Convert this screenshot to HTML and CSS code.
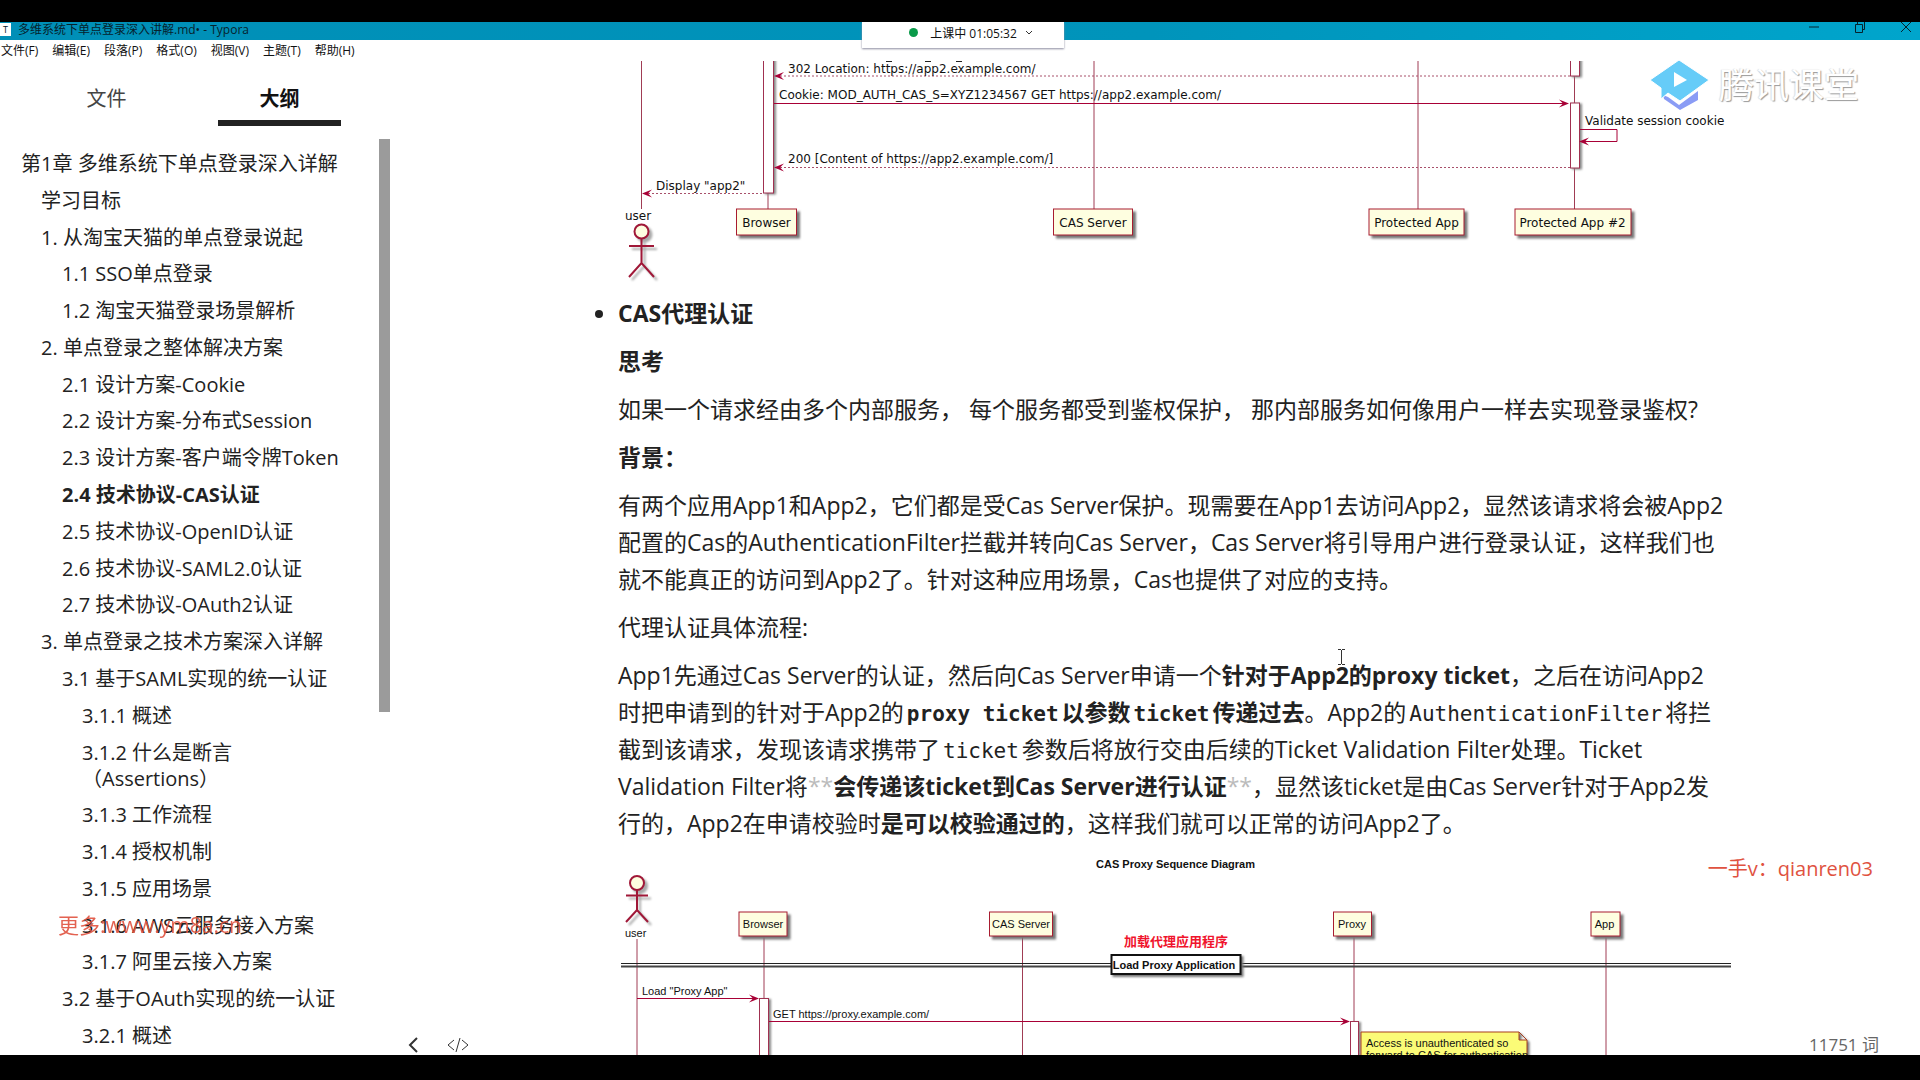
FILE: index.html
```html
<!DOCTYPE html>
<html lang="zh-CN">
  <head>
    <meta charset="UTF-8" />
    <meta name="viewport" content="width=device-width, initial-scale=1.0" />
    <title>多维系统下单点登录深入讲解.md• - Typora</title>
    <link rel="stylesheet" href="styles.css">
  </head>
  <body>
    <div class="window">
      <header class="titlebar">
        <span class="app-icon">T</span>
        <span class="title">多维系统下单点登录深入讲解.md• - Typora</span>
        <div class="controls">
          <button aria-label="最小化">
            <svg width="12" height="12" viewBox="0 0 12 12"><path d="M1 6h10" /></svg>
          </button>
          <button aria-label="还原">
            <svg width="12" height="12" viewBox="0 0 12 12"><path d="M1.5 3.5h7v8h-7zM3.5 3.500v-3h7v8h-2" /></svg>
          </button>
          <button aria-label="关闭">
            <svg width="12" height="12" viewBox="0 0 12 12"><path d="M1 1l10 10M11 1L1 11" /></svg>
          </button>
        </div>
      </header>
      <button class="class-status">
        <span class="dot"></span>
        <span>上课中 01:05:32</span>
        <svg width="8" height="6" viewBox="0 0 8 6"><path d="M1 1l3 3 3-3" /></svg>
      </button>
      <nav class="menubar">
        <button>文件(F)</button>
        <button>编辑(E)</button>
        <button>段落(P)</button>
        <button>格式(O)</button>
        <button>视图(V)</button>
        <button>主题(T)</button>
        <button>帮助(H)</button>
      </nav>
      <div class="workspace">
        <aside class="sidebar">
          <div class="tabs">
            <button class="tab">文件</button>
            <button class="tab active">大纲</button>
          </div>
          <div class="outline-wrap">
            <ul class="outline">
              <li class="l1"><a href="#">第1章 多维系统下单点登录深入详解</a></li>
              <li class="l2"><a href="#">学习目标</a></li>
              <li class="l2"><a href="#">1. 从淘宝天猫的单点登录说起</a></li>
              <li class="l3"><a href="#">1.1 SSO单点登录</a></li>
              <li class="l3"><a href="#">1.2 淘宝天猫登录场景解析</a></li>
              <li class="l2"><a href="#">2. 单点登录之整体解决方案</a></li>
              <li class="l3"><a href="#">2.1 设计方案-Cookie</a></li>
              <li class="l3"><a href="#">2.2 设计方案-分布式Session</a></li>
              <li class="l3"><a href="#">2.3 设计方案-客户端令牌Token</a></li>
              <li class="l3 active"><a href="#">2.4 技术协议-CAS认证</a></li>
              <li class="l3"><a href="#">2.5 技术协议-OpenID认证</a></li>
              <li class="l3"><a href="#">2.6 技术协议-SAML2.0认证</a></li>
              <li class="l3"><a href="#">2.7 技术协议-OAuth2认证</a></li>
              <li class="l2"><a href="#">3. 单点登录之技术方案深入详解</a></li>
              <li class="l3"><a href="#">3.1 基于SAML实现的统一认证</a></li>
              <li class="l4"><a href="#">3.1.1 概述</a></li>
              <li class="l4"><a href="#">3.1.2 什么是断言<br>（Assertions）</a></li>
              <li class="l4"><a href="#">3.1.3 工作流程</a></li>
              <li class="l4"><a href="#">3.1.4 授权机制</a></li>
              <li class="l4"><a href="#">3.1.5 应用场景</a></li>
              <li class="l4"><a href="#">3.1.6 AWS云服务接入方案</a></li>
              <li class="l4"><a href="#">3.1.7 阿里云接入方案</a></li>
              <li class="l3"><a href="#">3.2 基于OAuth实现的统一认证</a></li>
              <li class="l4"><a href="#">3.2.1 概述</a></li>
            </ul>
            <div class="scroll-thumb"></div>
          </div>
        </aside>
        <main class="editor">
          <svg class="diagram seq" width="1120" height="234" viewBox="618 61 1120 234">
            <!-- lifelines -->
            <path class="life" d="M641.5 61v148M768 61v148M1094 61v148M1418 61v148M1574.500 61v148" />
            <g class="act">
              <rect x="763.500" y="50" width="10" height="143" />
              <rect x="1570.500" y="50" width="9" height="26" />
              <rect x="1570.500" y="103" width="9" height="65" />
            </g>
            <!-- messages -->
            <path class="clip-marks" d="M886 61.500h6M925 61.500h6M956 61.500h6" />
            <path class="dash" d="M776 76h794M776 167.500h794M644 193.500h119" />
            <path class="msg" d="M774 103.500h792M1580 129.500h37v12h-35" />
            <path class="head" d="M774 76l10-4-4 4 4 4zM774 167.500l10-4-4 4 4 4zM642 193.500l10-4-4 4 4 4zM1569 103.500l-10-4 4 4-4 4zM1579 141.500l10-4-4 4 4 4z" />
            <text x="788" y="73">302 Location: https://app2.example.com/</text>
            <text x="779" y="99">Cookie: MOD_AUTH_CAS_S=XYZ1234567 GET https://app2.example.com/</text>
            <text x="1585" y="125">Validate session cookie</text>
            <text x="788" y="163">200 [Content of https://app2.example.com/]</text>
            <text x="656" y="190">Display "app2"</text>
            <text x="625" y="220">user</text>
            <g class="actor">
              <circle cx="641.5" cy="231.5" r="7" />
              <path d="M641.500 239v24M629 246h25M629 277l12.500-14 12.500 14" />
            </g>
            <g class="box">
              <rect x="736.500" y="209" width="60" height="26" />
              <rect x="1053.500" y="209" width="79" height="26" />
              <rect x="1369" y="209" width="95" height="26" />
              <rect x="1515" y="209" width="116" height="26" />
            </g>
            <g text-anchor="middle">
              <text x="766.500" y="227">Browser</text>
              <text x="1093" y="227">CAS Server</text>
              <text x="1416.500" y="227">Protected App</text>
              <text x="1572.500" y="227">Protected App #2</text>
            </g>
          </svg>
          <ul class="content">
            <li>
              <p><strong>CAS代理认证</strong></p>
              <p><strong>思考</strong></p>
              <p>如果一个请求经由多个内部服务， 每个服务都受到鉴权保护， 那内部服务如何像用户一样去实现登录鉴权?</p>
              <p><strong>背景：</strong></p>
              <p>有两个应用App1和App2，它们都是受Cas Server保护。现需要在App1去访问App2，显然该请求将会被App2<br>配置的Cas的AuthenticationFilter拦截并转向Cas Server，Cas Server将引导用户进行登录认证，这样我们也<br>就不能真正的访问到App2了。针对这种应用场景，Cas也提供了对应的支持。</p>
              <p>代理认证具体流程:</p>
              <p>App1先通过Cas Server的认证，然后向Cas Server申请一个<strong>针对于App2的proxy ticket</strong>，之后在访问App2<br>时把申请到的针对于App2的<strong><code>proxy ticket</code>以参数<code>ticket</code>传递过去</strong>。App2的<code>AuthenticationFilter</code>将拦<br>截到该请求，发现该请求携带了<code>ticket</code>参数后将放行交由后续的Ticket Validation Filter处理。Ticket<br>Validation Filter将<span class="mark">**</span><strong>会传递该ticket到Cas Server进行认证</strong><span class="mark">**</span>，显然该ticket是由Cas Server针对于App2发<br>行的，App2在申请校验时<strong>是可以校验通过的</strong>，这样我们就可以正常的访问App2了。</p>
            </li>
          </ul>
          <svg class="diagram proxy" width="1120" height="221" viewBox="618 842 1120 221">
            <text class="bold" x="1175.500" y="868" text-anchor="middle">CAS Proxy Sequence Diagram</text>
            <g class="actor">
              <circle cx="637" cy="883" r="7" />
              <path d="M637 890v20M626 895.500h22M626 922l11-12 11 12" />
            </g>
            <text x="625" y="937">user</text>
            <path class="life" d="M637 939v130M764 936v130M1022.500 936v130M1354 936v130M1606 936v130" />
            <g class="box">
              <rect x="739" y="912" width="48" height="24" />
              <rect x="989.500" y="912" width="63" height="24" />
              <rect x="1333.500" y="912" width="38" height="24" />
              <rect x="1591" y="912" width="29" height="24" />
            </g>
            <g text-anchor="middle">
              <text x="763" y="928">Browser</text>
              <text x="1021" y="928">CAS Server</text>
              <text x="1352" y="928">Proxy</text>
              <text x="1604.500" y="928">App</text>
            </g>
            <text class="note-cn" x="1124" y="946">加载代理应用程序</text>
            <!-- divider -->
            <path class="divider" d="M621 963.500h1110" />
            <path class="divider low" d="M621 966.500h1110" />
            <rect class="divider-box" x="1111.500" y="955" width="129" height="19" />
            <text class="bold" x="1174" y="969" text-anchor="middle">Load Proxy Application</text>
            <g class="act">
              <rect x="759.500" y="998.500" width="9" height="80" />
              <rect x="1350.500" y="1021.500" width="8" height="80" />
            </g>
            <path class="msg" d="M637 998.500h118M769 1021.500h577" />
            <path class="head" d="M759 998.500l-10-4 4 4-4 4zM1350 1021.500l-10-4 4 4-4 4z" />
            <text x="642" y="995">Load "Proxy App"</text>
            <text x="773" y="1018">GET https://proxy.example.com/</text>
            <path class="note" d="M1361 1032h158l8 8v40h-166zM1519 1032v8h8" />
            <text x="1366" y="1047">Access is unauthenticated so</text>
            <text x="1366" y="1059">forward to CAS for authentication</text>
          </svg>
        </main>
      </div>

      <div class="footer-left">
        <button aria-label="返回">
          <svg width="12" height="16" viewBox="0 0 12 16"><path d="M10 1L3 8l7 7" /></svg>
        </button>
        <button class="thin" aria-label="源代码模式">
          <svg width="22" height="16" viewBox="0 0 22 16"><path d="M7 3L1 8l6 5M15 3l6 5-6 5M13 1L9 15" /></svg>
        </button>
      </div>
      <div class="word-count">11751 词</div>

      <div class="brand">
        <svg width="60" height="50" viewBox="0 0 60 50">
          <path class="logo-base" d="M13 35l5 2 11 8 19-14v9L30 50 14 39z" />
          <path class="logo-top" d="M29 0l30 20-29 21-12-8-7 6V28L0 20z" />
          <path class="logo-play" d="M24 12v15l13-7z" />
        </svg>
        <span>腾讯课堂</span>
      </div>
      <div class="stamp stamp-left">更多:www.ym8a.cn</div>
      <div class="stamp stamp-right">一手v：qianren03</div>
      <svg class="cursor" width="9" height="18" viewBox="0 0 9 18"><path d="M1 1.500h3M5 1.500h3M4.500 2v14M1 16.500h3M5 16.500h3" /></svg>
    </div>
  </body>
</html>
```
FILE: styles.css
```css
* {
  padding: 0;
  margin: 0;
  box-sizing: border-box;
}
html,
body {
  height: 100%;
}
body {
  background-color: #000;
  padding: 22px 0 25px;
  font-family: "Open Sans", "Noto Sans CJK SC", sans-serif;
  color: #222;
  overflow: hidden;
}
button {
  font-family: inherit;
  color: inherit;
  background: none;
  border: none;
  cursor: pointer;
}
a {
  color: inherit;
  text-decoration: none;
}
ul {
  list-style: none;
}
svg {
  display: block;
}
svg path {
  fill: none;
}
/* -------------- */
.window {
  position: relative;
  height: 100%;
  background-color: #fff;
  display: flex;
  flex-direction: column;
  overflow: hidden;
}

.titlebar {
  height: 18px;
  flex-shrink: 0;
  display: flex;
  align-items: center;
  background: linear-gradient(90deg, #008fb7, #0094bb 60%, #00a5cc);
  font-size: 12px;
  line-height: 14px;
  color: #06222c;
}
.app-icon {
  width: 11px;
  height: 13px;
  margin-right: 7px;
  margin-bottom: 4px;
  background-color: #fff;
  font-size: 9px;
  line-height: 13px;
  text-align: center;
}
.title {
  padding-bottom: 3px;
}
.controls {
  margin-left: auto;
  display: flex;
  gap: 34px;
  padding: 0 8px 8px 0;
}
.controls svg {
  stroke: #06222c;
}

.class-status {
  position: absolute;
  top: 0;
  left: 862px;
  width: 202px;
  height: 26px;
  display: flex;
  align-items: center;
  justify-content: center;
  gap: 8px;
  padding: 0 0 5px 16px;
  background-color: #fff;
  box-shadow: 0 1px 2px #8c8ca0;
  font-size: 12px;
  color: #111;
}
.class-status .dot {
  width: 9px;
  height: 9px;
  margin-right: 4px;
  border-radius: 50%;
  background-color: #0a9a4a;
}
.class-status path {
  stroke: #333;
}

.menubar {
  height: 21px;
  flex-shrink: 0;
  display: flex;
  gap: 14px;
  padding-left: 1px;
}
.menubar button {
  font-size: 12px;
  line-height: 20px;
  color: #111;
}

.workspace {
  flex: 1;
  min-height: 0;
  display: flex;
}

/* sidebar */
.sidebar {
  width: 390px;
  flex-shrink: 0;
  display: flex;
  flex-direction: column;
}
.tabs {
  display: flex;
  padding: 16px 24px 0 20px;
}
.tab {
  flex: 1;
  height: 49px;
  padding-bottom: 8px;
  font-size: 20px;
  color: #444;
}
.tab.active {
  position: relative;
  font-weight: 700;
  color: #111;
}
.tab.active::after {
  content: "";
  position: absolute;
  left: 25px;
  right: 25px;
  bottom: 0;
  height: 6px;
  background-color: #222;
}
.outline-wrap {
  flex: 1;
  min-height: 0;
  display: flex;
  justify-content: space-between;
  padding-top: 13px;
}
.outline {
  display: flex;
  flex-direction: column;
  justify-content: space-between;
  padding: 12px 0 6px;
  font-size: 20px;
  line-height: 26px;
  white-space: nowrap;
}
.l1 {
  padding-left: 21px;
}
.l2 {
  padding-left: 41px;
}
.l3 {
  padding-left: 62px;
}
.l4 {
  padding-left: 82px;
}
.outline .active {
  font-weight: 700;
}
.scroll-thumb {
  width: 11px;
  height: 573px;
  background-color: #9b9b9b;
}

/* editor */
.editor {
  flex: 1;
  min-width: 0;
  padding-left: 228px;
  overflow: hidden;
}
.content {
  list-style: disc;
  font-size: 23px;
  line-height: 37px;
  white-space: nowrap;
}
.content p {
  margin-bottom: 11px;
}
.content p:last-child {
  margin-bottom: 0;
}
.content code {
  font-family: "DejaVu Sans Mono", monospace;
  font-size: 21px;
  line-height: 20px;
  padding: 0 3px;
}
.mark {
  color: #bbb;
}

/* diagrams */
.diagram text {
  fill: #111;
}
.seq text {
  font-family: "DejaVu Sans", sans-serif;
  font-size: 12px;
}
.proxy text {
  font-family: "Liberation Sans", sans-serif;
  font-size: 11px;
}
.proxy .bold {
  font-weight: 700;
}
.proxy .note-cn {
  font-family: "Noto Sans CJK SC", sans-serif;
  font-size: 13px;
  font-weight: 700;
  fill: #f0142d;
}
.life {
  stroke: #a03c54;
}
.act rect {
  fill: #fff;
  stroke: #a03050;
  filter: drop-shadow(2px 1px 1px #888);
}
.msg {
  stroke: #a80036;
}
.dash {
  stroke: #a8506a;
  stroke-dasharray: 2 2;
}
.clip-marks {
  stroke: #222;
}
.diagram .head {
  fill: #a80036;
}
.actor {
  stroke: #a01838;
  stroke-width: 2;
  filter: drop-shadow(3px 3px 1px #aaa);
}
.actor circle {
  fill: #fefee0;
}
.box rect {
  fill: #fefee0;
  stroke: #a81c30;
  stroke-width: 1;
  filter: drop-shadow(3px 3px 1px #777);
}
.divider {
  stroke: #222;
}
.divider.low {
  stroke: #444;
  stroke-width: 2;
}
.divider-box {
  fill: #fff;
  stroke: #111;
  stroke-width: 2;
  filter: drop-shadow(2px 2px 1px #777);
}
.diagram .note {
  fill: #fbfb77;
  stroke: #a84020;
  filter: drop-shadow(2px 2px 1px #777);
}

/* overlays */
.footer-left {
  position: absolute;
  left: 407px;
  bottom: 2px;
  display: flex;
  gap: 28px;
}
.footer-left path {
  stroke: #333;
  stroke-width: 2;
}
.footer-left .thin path {
  stroke: #333;
  stroke-width: 1;
}
.word-count {
  position: absolute;
  right: 41px;
  bottom: 0;
  font-size: 17px;
  line-height: 20px;
  color: #666;
}
.brand {
  position: absolute;
  top: 38px;
  right: 61px;
  display: flex;
  align-items: center;
  gap: 9px;
  font-size: 35px;
  line-height: 50px;
  color: #fff;
  text-shadow: 1px 1px 1px #999, -1px 0 1px #ddd;
}
.brand .logo-base {
  fill: #8a9cf5;
}
.brand .logo-top {
  fill: #66ccf8;
  stroke: #fff;
}
.brand .logo-play {
  fill: #fff;
}
.stamp {
  position: absolute;
  font-size: 20px;
  line-height: 30px;
  color: #e0523f;
}
.stamp-left {
  left: 58px;
  bottom: 115px;
  font-size: 21px;
  opacity: 0.9;
}
.stamp-right {
  right: 47px;
  bottom: 171px;
}
.cursor {
  position: absolute;
  left: 1337px;
  top: 626px;
  stroke: #333;
}
```
